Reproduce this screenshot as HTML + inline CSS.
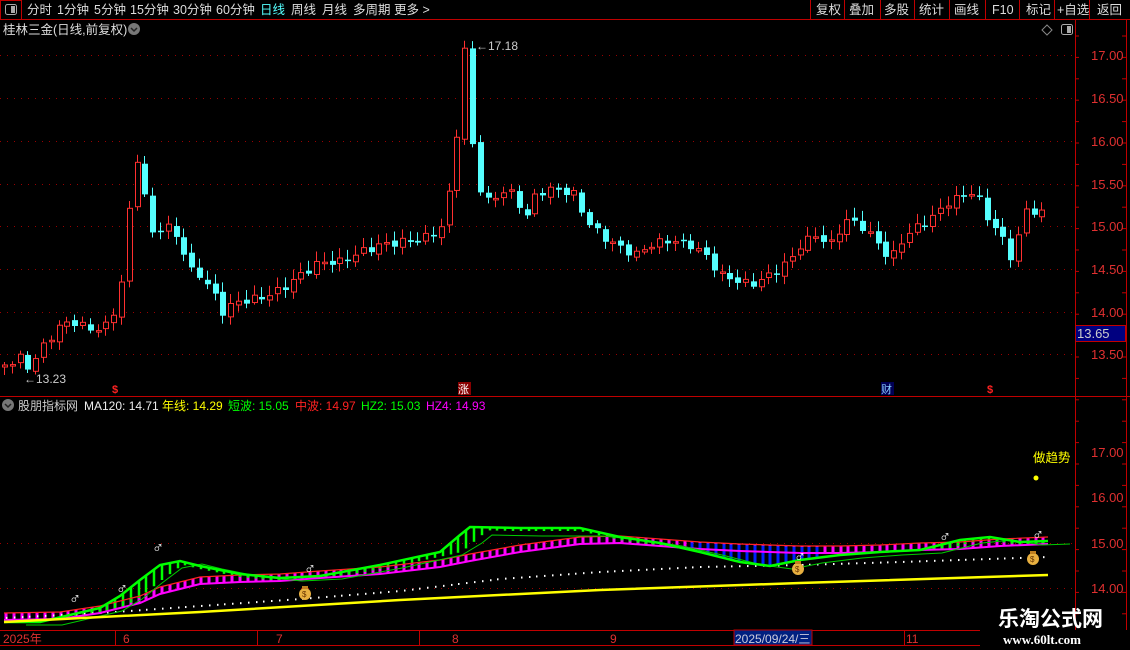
<!DOCTYPE html><html><head><meta charset="utf-8"><style>
body{margin:0;background:#000;width:1130px;height:650px;overflow:hidden;font-family:"Liberation Sans","Noto Sans CJK SC",sans-serif}
svg{position:absolute;left:0;top:0}
</style></head><body>
<svg id="s" width="1130" height="650" xmlns="http://www.w3.org/2000/svg" font-family="Liberation Sans, Noto Sans CJK SC, sans-serif">
<rect width="1130" height="650" fill="#000"/>
<g id="g"></g>
<line x1="0" y1="19.5" x2="1130" y2="19.5" stroke="#c00000"/>
<rect x="0.5" y="0.5" width="21" height="19" fill="none" stroke="#c00000"/>
<rect x="5.5" y="4.5" width="11" height="10" rx="2" fill="none" stroke="#aaa"/><rect x="11" y="6" width="4" height="7" fill="#aaa"/>
<g font-size="12.5" fill="#ddd">
<text x="27" y="14">分时</text><text x="57" y="14">1分钟</text><text x="94" y="14">5分钟</text><text x="130" y="14">15分钟</text><text x="173" y="14">30分钟</text><text x="216" y="14">60分钟</text>
<text x="260" y="14" fill="#5ff">日线</text><text x="291" y="14">周线</text><text x="322" y="14">月线</text><text x="353" y="14">多周期</text><text x="394" y="14">更多 &gt;</text>
<text x="816" y="14">复权</text><text x="849" y="14">叠加</text><text x="884" y="14">多股</text><text x="919" y="14">统计</text><text x="954" y="14">画线</text><text x="992" y="14">F10</text><text x="1026" y="14">标记</text><text x="1057" y="14">+自选</text><text x="1097" y="14">返回</text>
</g>
<g stroke="#c00000"><line x1="810.5" y1="0" x2="810.5" y2="19"/><line x1="844.5" y1="0" x2="844.5" y2="19"/><line x1="880.5" y1="0" x2="880.5" y2="19"/><line x1="914.5" y1="0" x2="914.5" y2="19"/><line x1="949.5" y1="0" x2="949.5" y2="19"/><line x1="985.5" y1="0" x2="985.5" y2="19"/><line x1="1019.5" y1="0" x2="1019.5" y2="19"/><line x1="1054.5" y1="0" x2="1054.5" y2="19"/><line x1="1089.5" y1="0" x2="1089.5" y2="19"/></g>
<text x="3" y="34" font-size="12.5" fill="#ddd">桂林三金(日线,前复权)</text>
<circle cx="134" cy="29" r="6" fill="#777"/><path d="M131 28 l3 3 l3 -3" stroke="#222" fill="none" stroke-width="1.5"/>
<path d="M1047 25 l5 5 l-5 5 l-5 -5z" fill="none" stroke="#888"/>
<rect x="1061.5" y="24.5" width="11" height="10" rx="2" fill="none" stroke="#aaa"/><rect x="1067" y="26" width="4" height="7" fill="#aaa"/>
<g stroke="#c00000"><line x1="1075.5" y1="20" x2="1075.5" y2="630"/><line x1="1126.5" y1="20" x2="1126.5" y2="630"/><line x1="0" y1="396.5" x2="1130" y2="396.5"/></g>
<g font-size="13" fill="#e03030">
<text x="1091" y="60">17.00</text><text x="1091" y="103">16.50</text><text x="1091" y="146">16.00</text><text x="1091" y="189">15.50</text><text x="1091" y="231">15.00</text><text x="1091" y="274">14.50</text><text x="1091" y="317">14.00</text><text x="1091" y="359">13.50</text>
<text x="1091" y="457">17.00</text><text x="1091" y="502">16.00</text><text x="1091" y="548">15.00</text><text x="1091" y="593">14.00</text>
</g>
<rect x="1075.5" y="325.5" width="50" height="16" fill="#000080" stroke="#c00000"/><text x="1077" y="338" font-size="13" fill="#ccc">13.65</text>
<text x="476" y="50" font-size="12" fill="#ccc">←17.18</text>
<text x="24" y="383" font-size="12" fill="#ccc">←13.23</text>
<text x="112" y="393" font-size="11" fill="#f22" font-weight="bold">$</text>
<text x="987" y="393" font-size="11" fill="#f22" font-weight="bold">$</text>
<rect x="458" y="382" width="13" height="13" fill="#800"/><text x="458" y="393" font-size="11" fill="#fff">涨</text>
<rect x="881" y="382" width="13" height="13" fill="#005"/><text x="881" y="393" font-size="11" fill="#8cf">财</text>
<circle cx="8" cy="405" r="6" fill="#777"/><path d="M5 404 l3 3 l3 -3" stroke="#222" fill="none" stroke-width="1.5"/>
<g font-size="12"><text x="18" y="410" fill="#ccc">股朋指标网</text><text x="84" y="410" fill="#eee">MA120: 14.71</text><text x="162" y="410" fill="#ff0">年线: 14.29</text><text x="228" y="410" fill="#0f0">短波: 15.05</text><text x="295" y="410" fill="#f22">中波: 14.97</text><text x="361" y="410" fill="#0f0">HZ2: 15.03</text><text x="426" y="410" fill="#f0f">HZ4: 14.93</text></g>
<text x="1033" y="462" font-size="12.5" fill="#ff0">做趋势</text><circle cx="1036" cy="478" r="2.5" fill="#ff0"/>
<g stroke="#c00000"><line x1="0" y1="630.5" x2="980" y2="630.5"/><line x1="0" y1="645.5" x2="980" y2="645.5"/><line x1="115.5" y1="630" x2="115.5" y2="645"/><line x1="257.5" y1="630" x2="257.5" y2="645"/><line x1="419.5" y1="630" x2="419.5" y2="645"/><line x1="904.5" y1="630" x2="904.5" y2="645"/></g>
<rect x="734" y="630" width="78" height="15" fill="#002080" stroke="#c00000"/>
<g font-size="12" fill="#e03030"><text x="3" y="643">2025年</text><text x="123" y="643">6</text><text x="276" y="643">7</text><text x="452" y="643">8</text><text x="610" y="643">9</text><text x="906" y="643">11</text></g>
<text x="735" y="643" font-size="12" fill="#ccd">2025/09/24/三</text>
<text x="998" y="626" font-size="21" font-weight="bold" fill="#fff">乐淘公式网</text>
<text x="1003" y="644" font-size="13" font-weight="bold" fill="#fff" font-family="Liberation Serif, serif">www.60lt.com</text>
</svg>
<script>
const g=document.getElementById('g');let h='';
[55,98,141,184,226,269,312,354].forEach(y=>h+=`<line x1="0" y1="${y}.5" x2="1075" y2="${y}.5" stroke="#900" stroke-dasharray="1 6"/>`);
[543,588].forEach(y=>h+=`<line x1="0" y1="${y}.5" x2="1075" y2="${y}.5" stroke="#900" stroke-dasharray="1 6"/>`);
for(let y=36;y<630;y+=21.4){h+=`<line x1="1075" y1="${y}" x2="1079" y2="${y}" stroke="#c00000"/><line x1="1122" y1="${y}" x2="1126" y2="${y}" stroke="#c00000"/>`}
function interp(pts,x){for(let i=1;i<pts.length;i++){if(x<=pts[i][0]){const a=pts[i-1],b=pts[i];return a[1]+(b[1]-a[1])*(x-a[0])/(b[0]-a[0]);}}return pts[pts.length-1][1];}
const cl=[[4,365],[20,358],[28,368],[44,345],[60,325],[75,322],[90,330],[110,325],[124,270],[134,148],[142,180],[150,235],[165,225],[180,240],[188,270],[200,275],[214,295],[222,312],[236,302],[260,298],[280,290],[300,275],[320,262],[340,262],[360,252],[380,245],[400,242],[420,240],[440,230],[452,180],[465,42],[472,145],[480,190],[490,205],[500,190],[515,195],[525,220],[535,195],[545,190],[560,190],[575,195],[585,220],[600,235],[615,245],[635,255],[650,245],[670,240],[690,245],[705,255],[720,275],[735,280],[750,285],[770,275],[790,260],[800,245],[815,235],[830,245],[845,220],[860,225],[875,240],[890,260],[905,235],[920,225],[935,215],[950,200],[960,198],[975,190],[985,215],[1000,235],[1012,260],[1025,210],[1040,212],[1048,222]];
let prev=365,i=0;
for(let x=4;x<=1049;x+=7.8,i++){
 let c=interp(cl,x)+(Math.sin(i*2.3)*4);
 let o=prev+Math.cos(i*1.7)*2;
 let top=Math.min(o,c),bot=Math.max(o,c);if(bot-top<1.5)bot=top+1.5;
 let hi=top-3-Math.abs(Math.sin(i*3.1))*7,lo=bot+2+Math.abs(Math.cos(i*2.7))*6;
 let up=c<o;let col=up?'#ff3030':'#55ffff';let xx=Math.round(x);
 h+=`<line x1="${xx}.5" y1="${hi}" x2="${xx}.5" y2="${lo}" stroke="${col}"/>`;
 if(up)h+=`<rect x="${xx-2}.5" y="${top}" width="5" height="${bot-top}" fill="#000" stroke="${col}"/>`;
 else h+=`<rect x="${xx-2}" y="${top}" width="6" height="${bot-top}" fill="${col}"/>`;
 prev=c;}
const gr=[[4,622],[40,622],[100,608],[120,596],[140,580],[160,565],[180,561],[200,566],[240,574],[280,578],[320,576],[380,565],[440,552],[460,535],[470,527],[520,528],[580,528],[620,537],[660,543],[700,552],[740,562],[770,566],[800,560],[840,555],[880,552],[920,550],[960,540],[990,537],[1020,542],[1048,541]];
const mg=[[4,620],[60,619],[100,613],[140,603],[160,594],[200,584],[240,582],[280,581],[320,578],[380,574],[440,567],[470,561],[520,552],[580,544],[620,543],[660,546],[700,549],[740,551],[800,553],[840,553],[880,552],[920,550],[960,549],[1000,546],[1048,544]];
const ye=[[4,622],[200,612],[400,600],[600,590],[800,583],[1048,575]];
const wh=[[4,617],[100,612],[200,605],[300,598],[400,590],[500,578],[600,571],[700,566],[800,564],[900,561],[1048,556]];
for(let x=6;x<=1048;x+=7.8){let xx=Math.round(x);
 let gy=interp(gr,x),gl=interp(gr,x-22),my=interp(mg,x);
 h+=`<line x1="${xx}" y1="${my}" x2="${xx}" y2="${my-7}" stroke="#f0f" stroke-width="3"/>`;
 if(gy<my-2){h+=`<line x1="${xx}" y1="${gy}" x2="${xx}" y2="${Math.min(Math.max(gl,gy+3),my)}" stroke="#0f0" stroke-width="2.5"/>`}
 else if(x>690&&x<820){h+=`<line x1="${xx}" y1="${my-6}" x2="${xx}" y2="${gy}" stroke="#0020ff" stroke-width="3"/>`}
 let wy=interp(wh,x);h+=`<rect x="${xx}" y="${wy}" width="1.5" height="2" fill="#fff"/>`;}
const pl=(p,c,w)=>`<polyline points="${p.map(a=>a.join(',')).join(' ')}" fill="none" stroke="${c}" stroke-width="${w}"/>`;
h+=pl(mg.map(a=>[a[0],a[1]-7]),'#f22',1.2)+pl(mg,'#f0f',2)+pl(gr.map(a=>[a[0]+22,a[1]+(a[0]>440&&a[0]<600?8:3)]),'#0c0',1)+pl(gr,'#0f0',2.5)+pl(ye,'#ff0',2.5);
[[75,598],[122,588],[158,547],[310,568],[800,556],[945,536],[1038,534]].forEach(p=>h+=`<text x="${p[0]-6}" y="${p[1]+6}" font-size="16" fill="#fff">♂</text>`);
[[305,593],[798,568],[1033,558]].forEach(p=>h+=`<ellipse cx="${p[0]}" cy="${p[1]+1}" rx="6" ry="6" fill="#e8b040"/><rect x="${p[0]-3}" y="${p[1]-7}" width="6" height="3" fill="#c08020"/><text x="${p[0]-3}" y="${p[1]+4}" font-size="8" fill="#630">$</text>`);
g.innerHTML=h;
</script>
</body></html>
